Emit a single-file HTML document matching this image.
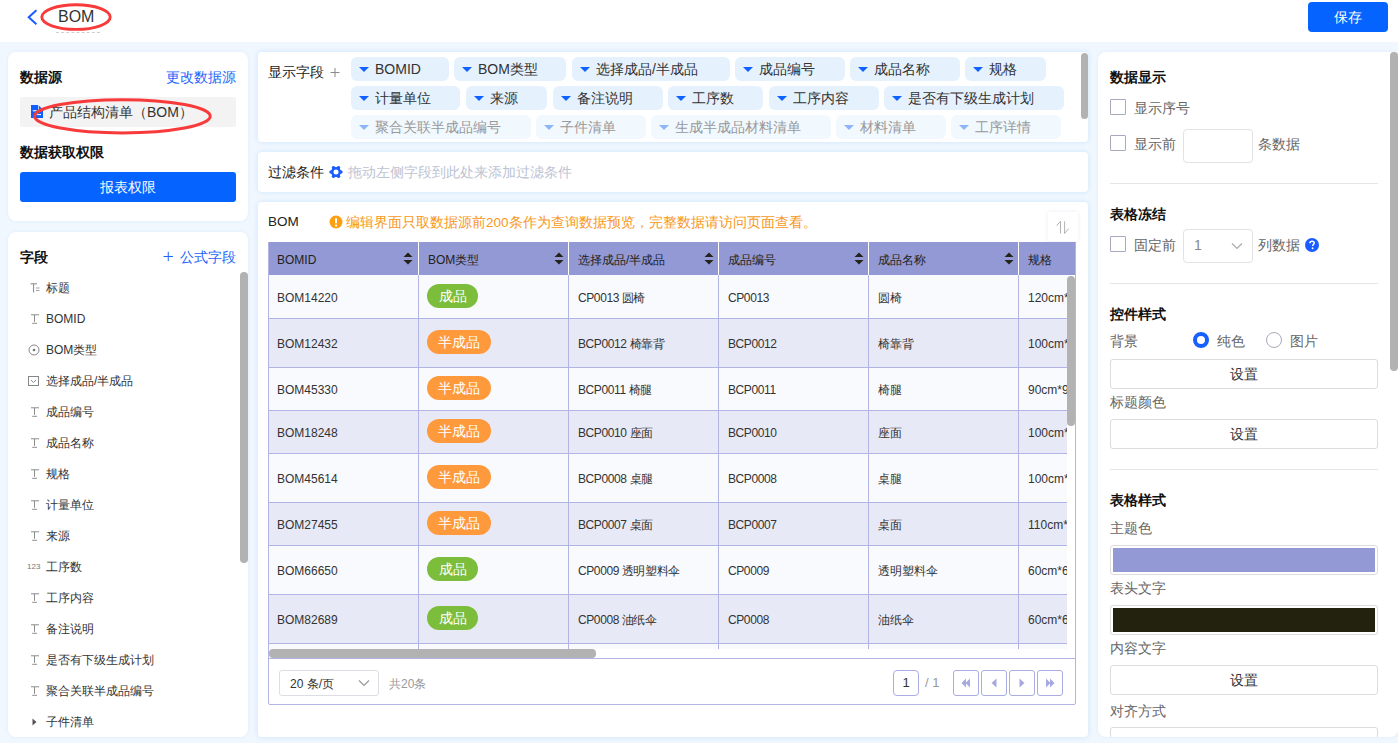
<!DOCTYPE html>
<html><head><meta charset="utf-8">
<style>
*{box-sizing:border-box;margin:0;padding:0}
html,body{width:1398px;height:743px;overflow:hidden}
body{position:relative;background:#F0F7FE;font-family:"Liberation Sans",sans-serif;color:#333;font-size:12px}
.a{position:absolute}
.t{position:absolute;white-space:nowrap}
.card{position:absolute;background:#fff;box-shadow:0 0 4px rgba(0,130,250,.07)}
.mc{box-shadow:0 0 5px 1px rgba(0,130,250,.11)}
.hdr{position:absolute;left:0;top:0;width:1398px;height:42px;background:#fff}
.bold{font-weight:bold;color:#111}
.blue{color:#1E66FA}
.tag{position:absolute;height:24px;border-radius:6px;background:#E5F2FE;font-size:14px;line-height:24px;color:#333;padding-left:24px;white-space:nowrap}
.tag::before{content:"";position:absolute;left:8px;top:10px;border-left:5px solid transparent;border-right:5px solid transparent;border-top:5px solid #0F62FE}
.tag.dis{background:#F1F8FE;color:#999}
.tag.dis::before{border-top-color:#8DB5FA}
.fld{position:absolute;left:46px;font-size:12px;line-height:16px;color:#333;white-space:nowrap}
.ico{position:absolute;left:28px;width:12px;height:12px}
.th{position:absolute;top:242px;height:33px;background:#9399D5;font-size:12px;line-height:37px;color:#22221A;padding-left:9px}
.cell{position:absolute;font-size:12px;color:#333;white-space:nowrap;overflow:hidden}
.badge{position:absolute;height:24px;border-radius:12px;color:#fff;font-size:14px;line-height:24px;text-align:center}
.g{background:#7CBD3B}
.o{background:#FF9A3C}
.lbl{position:absolute;font-size:14px;color:#666;white-space:nowrap;line-height:20px;padding-top:1px}
.cb{position:absolute;left:1110px;width:16px;height:16px;border:1px solid #A9A9BE;border-radius:1px;background:#fff}
.btn{position:absolute;left:1110px;width:268px;height:30px;border:1px solid #DCDCDC;border-radius:3px;background:#fff;font-size:14px;line-height:28px;text-align:center;color:#333}
.sw{position:absolute;left:1110px;width:268px;height:30px;border:1px solid #DCDCDC;border-radius:3px;background:#fff;padding:2px}
.sw div{width:100%;height:100%}
.hr{position:absolute;left:1110px;width:268px;height:1px;background:#E6E6E6}
.sb{position:absolute;background:#B2B2B2;border-radius:4px}
.pg{position:absolute;top:670px;width:26px;height:26px;border:1px solid #A9ADE2;border-radius:3px;background:#fff}
</style></head><body>

<!-- header -->
<div class="hdr"></div>
<svg class="a" style="left:26px;top:8px" width="14" height="19" viewBox="0 0 14 19"><path d="M10.4 2.3 L2.7 9.3 L10.4 16.3" fill="none" stroke="#1A5CFF" stroke-width="2"/></svg>
<div class="t" style="left:58px;top:7px;font-size:16px;line-height:20px;color:#333">BOM</div>
<div class="a" style="left:56px;top:32px;width:44px;border-top:1px dashed #CFCFCF"></div>
<svg class="a" style="left:38px;top:2px" width="76" height="31"><ellipse cx="38" cy="15.1" rx="34.2" ry="12.3" fill="none" stroke="#F83A3A" stroke-width="2.9"/></svg>
<div class="a" style="left:1308px;top:2px;width:80px;height:30px;background:#0563FF;border-radius:4px;color:#fff;font-size:14px;line-height:30px;text-align:center">保存</div>


<!-- left card 1 -->
<div class="card" style="left:8px;top:52px;width:240px;height:169px;border-radius:8px"></div>
<div class="t bold" style="left:20px;top:67px;font-size:14px;line-height:20px">数据源</div>
<div class="t blue" style="left:166px;top:67px;font-size:14px;line-height:20px">更改数据源</div>
<div class="a" style="left:20px;top:97px;width:216px;height:30px;background:#F3F3F3;border-radius:2px"></div>
<svg class="a" style="left:31px;top:105px" width="12" height="13" viewBox="0 0 12 13"><path d="M0 0H7.1V4.8H12V13H0Z" fill="#0F5FFF"/><path d="M7.8 0.4L11.8 4.3H7.8Z" fill="#0F5FFF"/><rect x="1.8" y="5.2" width="3.8" height="1.1" fill="#fff"/><rect x="5.4" y="9" width="4.6" height="1.1" fill="#fff"/></svg>
<div class="t" style="left:49px;top:102px;font-size:14px;line-height:20px;color:#333">产品结构清单（BOM）</div>
<svg class="a" style="left:31px;top:96px" width="183" height="40"><ellipse cx="91.4" cy="20.3" rx="87.8" ry="16.6" fill="none" stroke="#F83A3A" stroke-width="3"/></svg>
<div class="t bold" style="left:20px;top:142px;font-size:14px;line-height:20px">数据获取权限</div>
<div class="a" style="left:20px;top:172px;width:216px;height:30px;background:#0563FF;border-radius:3px;color:#fff;font-size:14px;line-height:30px;text-align:center">报表权限</div>

<!-- left card 2 -->
<div class="card" style="left:8px;top:232px;width:240px;height:505px;border-radius:8px"></div>
<div class="t bold" style="left:20px;top:247px;font-size:14px;line-height:20px">字段</div>
<svg class="a" style="left:163px;top:251px" width="11" height="11" viewBox="0 0 11 11"><path d="M0.5 5.5H10M5.25 0.8V10.2" stroke="#1E66FA" stroke-width="1" fill="none"/></svg>
<div class="t blue" style="left:180px;top:247px;font-size:14px;line-height:20px">公式字段</div>
<div class="sb" style="left:240px;top:272px;width:8px;height:291px"></div>
<div class="fld" style="top:280px">标题</div>
<svg class="a" style="left:30px;top:283px" width="10" height="10" viewBox="0 0 10 10"><path d="M0.5 0.8H7M3.6 0.8V9.5" stroke="#888" stroke-width="1" fill="none"/><path d="M6 5H9.5M6 7.5H9.5" stroke="#888" stroke-width="0.8" fill="none"/></svg>
<div class="fld" style="top:311px">BOMID</div>
<svg class="a" style="left:31px;top:314px" width="9" height="10" viewBox="0 0 9 10"><path d="M0 0.8H8M3.5 0.8V7.8M1.2 9.3H6" stroke="#8C8C8C" stroke-width="1" fill="none"/></svg>
<div class="fld" style="top:342px">BOM类型</div>
<svg class="a" style="left:28px;top:344px" width="12" height="12" viewBox="0 0 12 12"><circle cx="6" cy="6" r="5" stroke="#888" stroke-width="1" fill="none"/><circle cx="6" cy="6" r="1.3" fill="#777"/></svg>
<div class="fld" style="top:373px">选择成品/半成品</div>
<svg class="a" style="left:28px;top:376px" width="12" height="10" viewBox="0 0 12 10"><rect x="0.5" y="0.5" width="10" height="9" stroke="#888" stroke-width="1" fill="none"/><path d="M3 4L5.5 6.5L8 4" stroke="#888" stroke-width="1" fill="none"/></svg>
<div class="fld" style="top:404px">成品编号</div>
<svg class="a" style="left:31px;top:407px" width="9" height="10" viewBox="0 0 9 10"><path d="M0 0.8H8M3.5 0.8V7.8M1.2 9.3H6" stroke="#8C8C8C" stroke-width="1" fill="none"/></svg>
<div class="fld" style="top:435px">成品名称</div>
<svg class="a" style="left:31px;top:438px" width="9" height="10" viewBox="0 0 9 10"><path d="M0 0.8H8M3.5 0.8V7.8M1.2 9.3H6" stroke="#8C8C8C" stroke-width="1" fill="none"/></svg>
<div class="fld" style="top:466px">规格</div>
<svg class="a" style="left:31px;top:469px" width="9" height="10" viewBox="0 0 9 10"><path d="M0 0.8H8M3.5 0.8V7.8M1.2 9.3H6" stroke="#8C8C8C" stroke-width="1" fill="none"/></svg>
<div class="fld" style="top:497px">计量单位</div>
<svg class="a" style="left:31px;top:500px" width="9" height="10" viewBox="0 0 9 10"><path d="M0 0.8H8M3.5 0.8V7.8M1.2 9.3H6" stroke="#8C8C8C" stroke-width="1" fill="none"/></svg>
<div class="fld" style="top:528px">来源</div>
<svg class="a" style="left:31px;top:531px" width="9" height="10" viewBox="0 0 9 10"><path d="M0 0.8H8M3.5 0.8V7.8M1.2 9.3H6" stroke="#8C8C8C" stroke-width="1" fill="none"/></svg>
<div class="fld" style="top:559px">工序数</div>
<div class="t" style="left:27px;top:562px;font-size:8px;line-height:10px;color:#777">123</div>
<div class="fld" style="top:590px">工序内容</div>
<svg class="a" style="left:31px;top:593px" width="9" height="10" viewBox="0 0 9 10"><path d="M0 0.8H8M3.5 0.8V7.8M1.2 9.3H6" stroke="#8C8C8C" stroke-width="1" fill="none"/></svg>
<div class="fld" style="top:621px">备注说明</div>
<svg class="a" style="left:31px;top:624px" width="9" height="10" viewBox="0 0 9 10"><path d="M0 0.8H8M3.5 0.8V7.8M1.2 9.3H6" stroke="#8C8C8C" stroke-width="1" fill="none"/></svg>
<div class="fld" style="top:652px">是否有下级生成计划</div>
<svg class="a" style="left:31px;top:655px" width="9" height="10" viewBox="0 0 9 10"><path d="M0 0.8H8M3.5 0.8V7.8M1.2 9.3H6" stroke="#8C8C8C" stroke-width="1" fill="none"/></svg>
<div class="fld" style="top:683px">聚合关联半成品编号</div>
<svg class="a" style="left:31px;top:686px" width="9" height="10" viewBox="0 0 9 10"><path d="M0 0.8H8M3.5 0.8V7.8M1.2 9.3H6" stroke="#8C8C8C" stroke-width="1" fill="none"/></svg>
<div class="fld" style="top:714px">子件清单</div>
<svg class="a" style="left:32px;top:718px" width="6" height="8" viewBox="0 0 6 8"><path d="M0.5 0.5L4.5 4L0.5 7.5Z" fill="#555"/></svg>


<!-- middle card 1: display fields -->
<div class="card mc" style="left:258px;top:52px;width:830px;height:90px;border-radius:4px"></div>
<div class="t" style="left:268px;top:62px;font-size:14px;line-height:20px;color:#222">显示字段</div>
<svg class="a" style="left:330px;top:67px" width="10" height="11" viewBox="0 0 10 11"><path d="M0.5 5.5H9.5M5 1V10" stroke="#8A8A8A" stroke-width="1" fill="none"/></svg>
<div class="tag" style="left:351px;top:57px;width:98px">BOMID</div>
<div class="tag" style="left:454px;top:57px;width:112px">BOM类型</div>
<div class="tag" style="left:572px;top:57px;width:158px">选择成品/半成品</div>
<div class="tag" style="left:735px;top:57px;width:110px">成品编号</div>
<div class="tag" style="left:850px;top:57px;width:110px">成品名称</div>
<div class="tag" style="left:965px;top:57px;width:81px">规格</div>
<div class="tag" style="left:351px;top:86px;width:109px">计量单位</div>
<div class="tag" style="left:466px;top:86px;width:81px">来源</div>
<div class="tag" style="left:553px;top:86px;width:110px">备注说明</div>
<div class="tag" style="left:668px;top:86px;width:95px">工序数</div>
<div class="tag" style="left:769px;top:86px;width:110px">工序内容</div>
<div class="tag" style="left:884px;top:86px;width:180px">是否有下级生成计划</div>
<div class="tag dis" style="left:351px;top:115px;width:180px">聚合关联半成品编号</div>
<div class="tag dis" style="left:536px;top:115px;width:110px">子件清单</div>
<div class="tag dis" style="left:651px;top:115px;width:180px">生成半成品材料清单</div>
<div class="tag dis" style="left:836px;top:115px;width:110px">材料清单</div>
<div class="tag dis" style="left:951px;top:115px;width:110px">工序详情</div>
<div class="sb" style="left:1081px;top:53px;width:7px;height:66px"></div>

<!-- middle card 2: filter -->
<div class="card mc" style="left:258px;top:152px;width:830px;height:40px;border-radius:4px"></div>
<div class="t" style="left:268px;top:162px;font-size:14px;line-height:20px;color:#222">过滤条件</div>
<svg class="a" style="left:329px;top:165px" width="14" height="14" viewBox="0 0 14 14"><g fill="#1A5CFF"><circle cx="7" cy="7" r="5"/><circle cx="11.90" cy="7.00" r="1.8"/><circle cx="9.45" cy="11.24" r="1.8"/><circle cx="4.55" cy="11.24" r="1.8"/><circle cx="2.10" cy="7.00" r="1.8"/><circle cx="4.55" cy="2.76" r="1.8"/><circle cx="9.45" cy="2.76" r="1.8"/></g><circle cx="7" cy="7" r="2.5" fill="#fff"/></svg>
<div class="t" style="left:348px;top:162px;font-size:14px;line-height:20px;color:#BCC3D3">拖动左侧字段到此处来添加过滤条件</div>

<!-- middle card 3: table -->
<div class="card mc" style="left:258px;top:202px;width:830px;height:535px;border-radius:4px"></div>
<div class="t" style="left:268px;top:212px;font-size:13.5px;line-height:20px;color:#222">BOM</div>
<svg class="a" style="left:329px;top:215px" width="14" height="14" viewBox="0 0 14 14"><circle cx="7" cy="7" r="6.5" fill="#FF9F10"/><rect x="6" y="3" width="2" height="5.5" rx="1" fill="#fff"/><circle cx="7" cy="10.6" r="1.1" fill="#fff"/></svg>
<div class="t" style="left:346px;top:213px;font-size:13.5px;line-height:20px;color:#F7981A">编辑界面只取数据源前200条作为查询数据预览，完整数据请访问页面查看。</div>
<div class="a" style="left:1048px;top:212px;width:30px;height:29px;background:#fff;box-shadow:0 0 4px rgba(80,60,160,.10)"></div>
<svg class="a" style="left:1054px;top:219px" width="18" height="17" viewBox="0 0 18 17"><path d="M2.6 6.6L6.5 2.3V14.5M10.6 2.3V14.5L14.6 9.6" stroke="#B2B2B2" stroke-width="1" fill="none"/></svg>
<div class="a" style="left:268px;top:275px;width:799px;height:374px;background:#F9FAFE;overflow:hidden">
<div class="a" style="left:0;top:0px;width:799px;height:44px;background:#F9FAFE;border-bottom:1px solid #B2B5E4"></div>
<div class="cell" style="left:9px;top:3px;width:141px;height:41px;line-height:41px">BOM14220</div>
<div class="badge g" style="left:159px;top:9px;width:51px">成品</div>
<div class="cell" style="left:310px;top:3px;width:141px;height:41px;line-height:41px;letter-spacing:-0.4px">CP0013 圆椅</div>
<div class="cell" style="left:460px;top:3px;width:141px;height:41px;line-height:41px;letter-spacing:-0.4px">CP0013</div>
<div class="cell" style="left:610px;top:3px;width:141px;height:41px;line-height:41px">圆椅</div>
<div class="cell" style="left:760px;top:3px;width:141px;height:41px;line-height:41px">120cm*80cm*75cm</div>
<div class="a" style="left:0;top:44px;width:799px;height:49px;background:#E8E9F6;border-bottom:1px solid #B2B5E4"></div>
<div class="cell" style="left:9px;top:46px;width:141px;height:46px;line-height:46px">BOM12432</div>
<div class="badge o" style="left:159px;top:55px;width:64px">半成品</div>
<div class="cell" style="left:310px;top:46px;width:141px;height:46px;line-height:46px;letter-spacing:-0.4px">BCP0012 椅靠背</div>
<div class="cell" style="left:460px;top:46px;width:141px;height:46px;line-height:46px;letter-spacing:-0.4px">BCP0012</div>
<div class="cell" style="left:610px;top:46px;width:141px;height:46px;line-height:46px">椅靠背</div>
<div class="cell" style="left:760px;top:46px;width:141px;height:46px;line-height:46px">100cm*40cm*10cm</div>
<div class="a" style="left:0;top:93px;width:799px;height:43px;background:#F9FAFE;border-bottom:1px solid #B2B5E4"></div>
<div class="cell" style="left:9px;top:95px;width:141px;height:40px;line-height:40px">BOM45330</div>
<div class="badge o" style="left:159px;top:101px;width:64px">半成品</div>
<div class="cell" style="left:310px;top:95px;width:141px;height:40px;line-height:40px;letter-spacing:-0.4px">BCP0011 椅腿</div>
<div class="cell" style="left:460px;top:95px;width:141px;height:40px;line-height:40px;letter-spacing:-0.4px">BCP0011</div>
<div class="cell" style="left:610px;top:95px;width:141px;height:40px;line-height:40px">椅腿</div>
<div class="cell" style="left:760px;top:95px;width:141px;height:40px;line-height:40px">90cm*9cm*9cm</div>
<div class="a" style="left:0;top:136px;width:799px;height:43px;background:#E8E9F6;border-bottom:1px solid #B2B5E4"></div>
<div class="cell" style="left:9px;top:138px;width:141px;height:40px;line-height:40px">BOM18248</div>
<div class="badge o" style="left:159px;top:144px;width:64px">半成品</div>
<div class="cell" style="left:310px;top:138px;width:141px;height:40px;line-height:40px;letter-spacing:-0.4px">BCP0010 座面</div>
<div class="cell" style="left:460px;top:138px;width:141px;height:40px;line-height:40px;letter-spacing:-0.4px">BCP0010</div>
<div class="cell" style="left:610px;top:138px;width:141px;height:40px;line-height:40px">座面</div>
<div class="cell" style="left:760px;top:138px;width:141px;height:40px;line-height:40px">100cm*40cm</div>
<div class="a" style="left:0;top:179px;width:799px;height:49px;background:#F9FAFE;border-bottom:1px solid #B2B5E4"></div>
<div class="cell" style="left:9px;top:181px;width:141px;height:46px;line-height:46px">BOM45614</div>
<div class="badge o" style="left:159px;top:190px;width:64px">半成品</div>
<div class="cell" style="left:310px;top:181px;width:141px;height:46px;line-height:46px;letter-spacing:-0.4px">BCP0008 桌腿</div>
<div class="cell" style="left:460px;top:181px;width:141px;height:46px;line-height:46px;letter-spacing:-0.4px">BCP0008</div>
<div class="cell" style="left:610px;top:181px;width:141px;height:46px;line-height:46px">桌腿</div>
<div class="cell" style="left:760px;top:181px;width:141px;height:46px;line-height:46px">100cm*10cm</div>
<div class="a" style="left:0;top:228px;width:799px;height:43px;background:#E8E9F6;border-bottom:1px solid #B2B5E4"></div>
<div class="cell" style="left:9px;top:230px;width:141px;height:40px;line-height:40px">BOM27455</div>
<div class="badge o" style="left:159px;top:236px;width:64px">半成品</div>
<div class="cell" style="left:310px;top:230px;width:141px;height:40px;line-height:40px;letter-spacing:-0.4px">BCP0007 桌面</div>
<div class="cell" style="left:460px;top:230px;width:141px;height:40px;line-height:40px;letter-spacing:-0.4px">BCP0007</div>
<div class="cell" style="left:610px;top:230px;width:141px;height:40px;line-height:40px">桌面</div>
<div class="cell" style="left:760px;top:230px;width:141px;height:40px;line-height:40px">110cm*80cm</div>
<div class="a" style="left:0;top:271px;width:799px;height:49px;background:#F9FAFE;border-bottom:1px solid #B2B5E4"></div>
<div class="cell" style="left:9px;top:273px;width:141px;height:46px;line-height:46px">BOM66650</div>
<div class="badge g" style="left:159px;top:282px;width:51px">成品</div>
<div class="cell" style="left:310px;top:273px;width:141px;height:46px;line-height:46px;letter-spacing:-0.4px">CP0009 透明塑料伞</div>
<div class="cell" style="left:460px;top:273px;width:141px;height:46px;line-height:46px;letter-spacing:-0.4px">CP0009</div>
<div class="cell" style="left:610px;top:273px;width:141px;height:46px;line-height:46px">透明塑料伞</div>
<div class="cell" style="left:760px;top:273px;width:141px;height:46px;line-height:46px">60cm*60cm</div>
<div class="a" style="left:0;top:320px;width:799px;height:49px;background:#E8E9F6;border-bottom:1px solid #B2B5E4"></div>
<div class="cell" style="left:9px;top:322px;width:141px;height:46px;line-height:46px">BOM82689</div>
<div class="badge g" style="left:159px;top:331px;width:51px">成品</div>
<div class="cell" style="left:310px;top:322px;width:141px;height:46px;line-height:46px;letter-spacing:-0.4px">CP0008 油纸伞</div>
<div class="cell" style="left:460px;top:322px;width:141px;height:46px;line-height:46px;letter-spacing:-0.4px">CP0008</div>
<div class="cell" style="left:610px;top:322px;width:141px;height:46px;line-height:46px">油纸伞</div>
<div class="cell" style="left:760px;top:322px;width:141px;height:46px;line-height:46px">60cm*60cm</div>
<div class="a" style="left:150px;top:0;width:1px;height:374px;background:#B2B5E4"></div>
<div class="a" style="left:300px;top:0;width:1px;height:374px;background:#B2B5E4"></div>
<div class="a" style="left:450px;top:0;width:1px;height:374px;background:#B2B5E4"></div>
<div class="a" style="left:600px;top:0;width:1px;height:374px;background:#B2B5E4"></div>
<div class="a" style="left:750px;top:0;width:1px;height:374px;background:#B2B5E4"></div>
</div>
<div class="th" style="left:268px;width:150px">BOMID</div>
<svg class="a" style="left:403px;top:252px" width="10" height="13" viewBox="0 0 10 13"><path d="M5 0.5L9.5 5H0.5Z M5 12.5L9.5 8H0.5Z" fill="#23231A"/></svg>
<div class="th" style="left:419px;width:150px">BOM类型</div>
<svg class="a" style="left:554px;top:252px" width="10" height="13" viewBox="0 0 10 13"><path d="M5 0.5L9.5 5H0.5Z M5 12.5L9.5 8H0.5Z" fill="#23231A"/></svg>
<div class="th" style="left:569px;width:150px">选择成品/半成品</div>
<svg class="a" style="left:704px;top:252px" width="10" height="13" viewBox="0 0 10 13"><path d="M5 0.5L9.5 5H0.5Z M5 12.5L9.5 8H0.5Z" fill="#23231A"/></svg>
<div class="th" style="left:719px;width:150px">成品编号</div>
<svg class="a" style="left:854px;top:252px" width="10" height="13" viewBox="0 0 10 13"><path d="M5 0.5L9.5 5H0.5Z M5 12.5L9.5 8H0.5Z" fill="#23231A"/></svg>
<div class="th" style="left:869px;width:150px">成品名称</div>
<svg class="a" style="left:1004px;top:252px" width="10" height="13" viewBox="0 0 10 13"><path d="M5 0.5L9.5 5H0.5Z M5 12.5L9.5 8H0.5Z" fill="#23231A"/></svg>
<div class="th" style="left:1019px;width:57px">规格</div>
<div class="a" style="left:418px;top:242px;width:1px;height:33px;background:#fff"></div>
<div class="a" style="left:568px;top:242px;width:1px;height:33px;background:#fff"></div>
<div class="a" style="left:718px;top:242px;width:1px;height:33px;background:#fff"></div>
<div class="a" style="left:868px;top:242px;width:1px;height:33px;background:#fff"></div>
<div class="a" style="left:1018px;top:242px;width:1px;height:33px;background:#fff"></div>
<div class="a" style="left:268px;top:242px;width:1px;height:417px;background:#B2B5E4"></div>
<div class="a" style="left:1075px;top:242px;width:1px;height:417px;background:#B2B5E4"></div>
<div class="sb" style="left:1067px;top:276px;width:8px;height:150px"></div>
<div class="sb" style="left:269px;top:649px;width:327px;height:9px"></div>
<div class="a" style="left:268px;top:658px;width:808px;height:47px;border:1px solid #B2B5E4;border-radius:0 0 2px 2px"></div>
<div class="a" style="left:279px;top:670px;width:100px;height:26px;border:1px solid #DDDDE6;border-radius:3px;background:#fff"></div>
<div class="t" style="left:290px;top:676px;font-size:12px;line-height:16px;color:#333">20 条/页</div>
<svg class="a" style="left:358px;top:679px" width="12" height="8" viewBox="0 0 12 8"><path d="M1 1.5L6 6.5L11 1.5" stroke="#999" stroke-width="1.2" fill="none"/></svg>
<div class="t" style="left:389px;top:676px;font-size:12px;line-height:16px;color:#999">共20条</div>
<div class="a" style="left:893px;top:670px;width:26px;height:26px;border:1px solid #A9ADE2;border-radius:4px;background:#fff;font-size:13px;line-height:24px;text-align:center;color:#333">1</div>
<div class="t" style="left:925px;top:675px;font-size:13px;line-height:16px;color:#999">/ 1</div>
<div class="pg" style="left:953px"><svg width="24" height="24" viewBox="0 0 24 24"><path d="M7.5 12L12 7.5V16.5Z M11.5 12L16 7.5V16.5Z" fill="#A5A9DD"/></svg></div>
<div class="pg" style="left:981px"><svg width="24" height="24" viewBox="0 0 24 24"><path d="M9.5 12L14.5 7.5V16.5Z" fill="#A5A9DD"/></svg></div>
<div class="pg" style="left:1009px"><svg width="24" height="24" viewBox="0 0 24 24"><path d="M14.5 12L9.5 7.5V16.5Z" fill="#A5A9DD"/></svg></div>
<div class="pg" style="left:1037px"><svg width="24" height="24" viewBox="0 0 24 24"><path d="M12.5 12L8 7.5V16.5Z M16.5 12L12 7.5V16.5Z" fill="#A5A9DD"/></svg></div>

<!-- right panel -->
<div class="card" style="left:1098px;top:52px;width:300px;height:685px;border-radius:8px"></div>
<div class="t bold" style="left:1110px;top:67px;font-size:14px;line-height:20px">数据显示</div>
<div class="cb" style="top:99px"></div>
<div class="lbl" style="left:1134px;top:97px">显示序号</div>
<div class="cb" style="top:135px"></div>
<div class="lbl" style="left:1134px;top:133px">显示前</div>
<div class="a" style="left:1183px;top:129px;width:70px;height:34px;border:1px solid #E2E2E2;border-radius:4px"></div>
<div class="lbl" style="left:1258px;top:133px">条数据</div>
<div class="hr" style="top:183px"></div>
<div class="t bold" style="left:1110px;top:204px;font-size:14px;line-height:20px">表格冻结</div>
<div class="cb" style="top:236px"></div>
<div class="lbl" style="left:1134px;top:234px">固定前</div>
<div class="a" style="left:1183px;top:229px;width:70px;height:34px;border:1px solid #E2E2E2;border-radius:4px"></div>
<div class="lbl" style="left:1194px;top:234px;color:#888">1</div>
<svg class="a" style="left:1231px;top:242px" width="12" height="8" viewBox="0 0 12 8"><path d="M1 1.5L6 6.5L11 1.5" stroke="#AAA" stroke-width="1.2" fill="none"/></svg>
<div class="lbl" style="left:1258px;top:234px">列数据</div>
<svg class="a" style="left:1305px;top:238px" width="14" height="14" viewBox="0 0 14 14"><circle cx="7" cy="7" r="7" fill="#1A5CFF"/><path d="M4.9 5.3C4.9 4 5.9 3.2 7.1 3.2C8.3 3.2 9.2 4 9.2 5.1C9.2 6.4 7.6 6.6 7.6 8" stroke="#fff" stroke-width="1.5" fill="none"/><circle cx="7.6" cy="10.3" r="0.95" fill="#fff"/></svg>
<div class="hr" style="top:283px"></div>
<div class="t bold" style="left:1110px;top:304px;font-size:14px;line-height:20px">控件样式</div>
<div class="lbl" style="left:1110px;top:330px">背景</div>
<div class="a" style="left:1193px;top:332px;width:16px;height:16px;border-radius:50%;border:4.5px solid #1660FF;background:#fff"></div>
<div class="lbl" style="left:1217px;top:330px">纯色</div>
<div class="a" style="left:1266px;top:332px;width:16px;height:16px;border-radius:50%;border:1px solid #A9A9BE;background:#fff"></div>
<div class="lbl" style="left:1290px;top:330px">图片</div>
<div class="btn" style="top:359px">设置</div>
<div class="lbl" style="left:1110px;top:391px">标题颜色</div>
<div class="btn" style="top:419px">设置</div>
<div class="hr" style="top:469px"></div>
<div class="t bold" style="left:1110px;top:490px;font-size:14px;line-height:20px">表格样式</div>
<div class="lbl" style="left:1110px;top:517px">主题色</div>
<div class="sw" style="top:545px"><div style="background:#9399D5"></div></div>
<div class="lbl" style="left:1110px;top:577px">表头文字</div>
<div class="sw" style="top:605px"><div style="background:#22220F"></div></div>
<div class="lbl" style="left:1110px;top:637px">内容文字</div>
<div class="btn" style="top:665px">设置</div>
<div class="lbl" style="left:1110px;top:700px">对齐方式</div>
<div class="a" style="left:1098px;top:727px;width:300px;height:10px;overflow:hidden"><div class="btn" style="left:12px;top:0;height:30px"></div></div>
<div class="sb" style="left:1390px;top:52px;width:8px;height:319px"></div>

</body></html>
